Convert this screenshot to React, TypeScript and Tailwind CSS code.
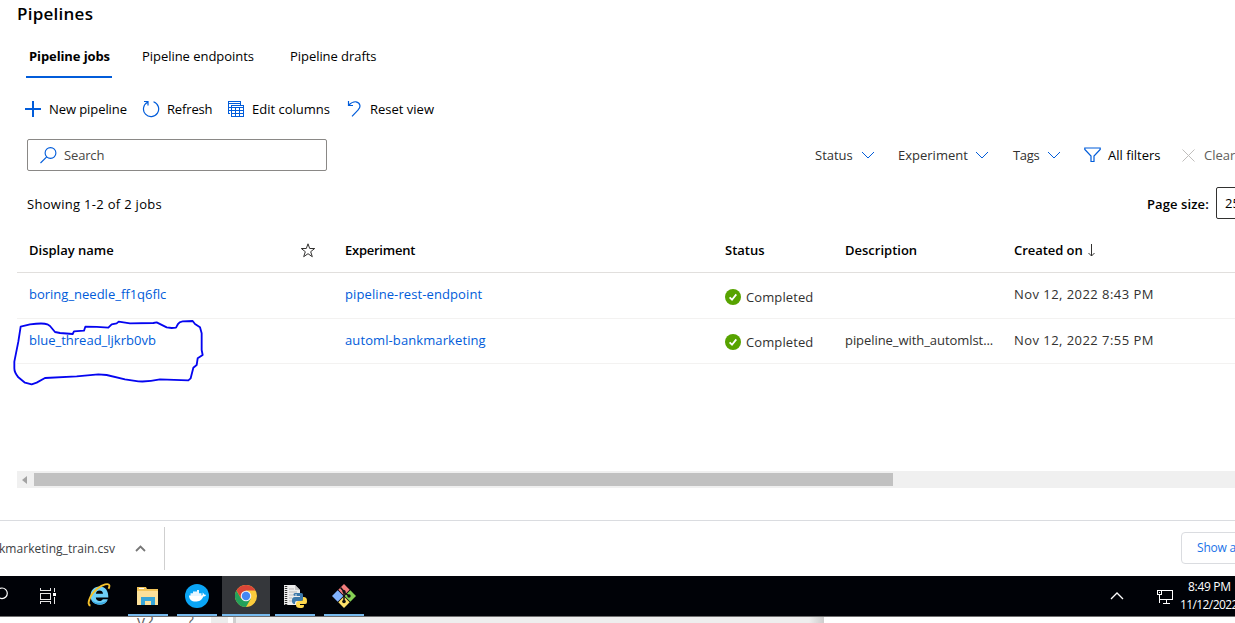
import React from "react";

const BLUE = "#015cda";

function Chevron() {
  return (
    <svg width="14" height="8" viewBox="0 0 14 8" fill="none" stroke={BLUE} strokeWidth="1">
      <path d="M1 1l6 6 6-6" />
    </svg>
  );
}

function Check() {
  return (
    <svg width="16" height="16" viewBox="0 0 16 16" className="shrink-0">
      <circle cx="8" cy="8" r="8" fill="#57a300" />
      <path d="M4.6 8.4l2.4 2.3 4.3-5.3" fill="none" stroke="#fff" strokeWidth="1.8" />
    </svg>
  );
}

function Toolbar() {
  return (
    <div className="flex h-[61px] items-center pl-[25px] text-black">
      <svg width="16" height="16" viewBox="0 0 16 16" stroke={BLUE} strokeWidth="2" shapeRendering="crispEdges">
        <path d="M8 0v16M0 8h16" />
      </svg>
      <span className="ml-2 w-[93px] tracking-[-0.08px]">New pipeline</span>
      <svg width="18" height="18" viewBox="0 0 18 18" fill="none" stroke={BLUE} strokeWidth="1.2">
        <path d="M11.500 1.800A7.600 7.600 0 1 1 5.500 2.300M2 1.500h4v4" />
      </svg>
      <span className="ml-[7px] w-[61px] tracking-[-0.15px]">Refresh</span>
      <svg className="mr-px" width="16" height="16" viewBox="0 0 16 16" fill="none" stroke={BLUE} strokeWidth="1" shapeRendering="crispEdges">
        <path d="M2 12.500H.5V.5h12V4M.5 2.500h12M1 6.500h2M1 9.500h2M3.500 4.500h12v11h-12zM3.500 6.500h12M3.500 9.500h12M3.500 12.500h12M7.500 6v9M11.500 6v9" />
      </svg>
      <span className="ml-[7px] w-[94px]">Edit columns</span>
      <svg width="15" height="17" viewBox="0 0 15 17" fill="none" stroke={BLUE} strokeWidth="1.2">
        <path d="M2.500 1v4.500H7M2.500 5.300C5 2.800 7 1.500 10 1.800c4.500.8 5 5.300 2.200 8L6 16.300" />
      </svg>
      <span className="ml-[9px]">Reset view</span>
    </div>
  );
}

function SearchRow() {
  return (
    <div className="flex h-8 items-center pl-[27px] text-[#323130]">
      <div className="flex h-8 w-[300px] shrink-0 items-center rounded-[2px] border border-[#8a8886] pl-3">
        <svg width="17" height="17" viewBox="0 0 17 17" fill="none" stroke={BLUE} strokeWidth="1.1">
          <circle cx="10.500" cy="6" r="5.400" />
          <path d="M6.700 9.800L.5 16" />
        </svg>
        <span className="ml-[7px] tracking-[-0.15px] text-[#484644]">Search</span>
      </div>
      <div className="ml-[488px] flex shrink-0 items-center whitespace-nowrap">
        <span className="w-[46px]">Status</span>
        <Chevron />
        <span className="ml-[23px] w-[77px]">Experiment</span>
        <Chevron />
        <span className="ml-[24px] w-[34px] tracking-[-0.3px]">Tags</span>
        <Chevron />
        <svg className="ml-[23px]" width="17" height="16" viewBox="0 0 17 16" fill="none" stroke={BLUE} strokeWidth="1.2">
          <path d="M.8 1h15.400v1.500L10 9v5.500H7V9L.8 2.500z" />
        </svg>
        <span className="ml-[7px] w-[74px] text-black">All filters</span>
        <svg width="13" height="13" viewBox="0 0 13 13" stroke="#c0bebc" strokeWidth="1">
          <path d="M.5.5l12 12M12.500.5l-12 12" />
        </svg>
        <span className="ml-[9px] text-[#605e5c]">Clear all</span>
      </div>
    </div>
  );
}

const COLS = "grid grid-cols-[271px_45px_380px_120px_169px_1fr] pl-3 ml-[17px]";

function Row({ name, exp, desc, date, last }: { name: string; exp: string; desc: string; date: string; last?: boolean }) {
  return (
    <div className={`${COLS} border-b border-[#f3f2f1] text-[#323130] ${last ? "h-[45px]" : "h-[46px]"}`}>
      <span className="pt-[11px] text-[#015cda]">{name}</span>
      <span />
      <span className="pt-[11px] tracking-[0.1px] text-[#015cda]">{exp}</span>
      <span className={`flex items-start gap-[5px] ${last ? "pt-[15px]" : "pt-[16px]"}`}>
        <Check />
        <span className="-mt-[2px] tracking-[0.1px]">Completed</span>
      </span>
      <span className="pt-[11px] tracking-[-0.06px]">{desc}</span>
      <span className="pt-[11px] tracking-[0.45px]">{date}</span>
    </div>
  );
}

function Table() {
  return (
    <div>
      <div className={`${COLS} h-[54px] border-b border-[#e1dfdd] pt-[21px] font-semibold text-black`}>
        <span>Display name</span>
        <svg className="mt-[3px]" width="16" height="15" viewBox="0 0 16 15" fill="none" stroke="#323130" strokeWidth="1">
          <path d="M8 .8l1.700 4.700h5l-4 3.200 1.600 5L8 10.700l-4.300 3 1.600-5-4-3.200h5z" />
        </svg>
        <span className="tracking-[-0.25px]">Experiment</span>
        <span>Status</span>
        <span>Description</span>
        <span className="flex">
          <span className="w-[73px] tracking-[-0.05px]">Created on</span>
          <svg className="mt-1" width="9" height="13" viewBox="0 0 9 13" fill="none" stroke="#323130" strokeWidth="1">
            <path d="M4.500 0v12M1.500 9l3 3 3-3" />
          </svg>
        </span>
      </div>
      <Row name="boring_needle_ff1q6flc" exp="pipeline-rest-endpoint" desc="" date="Nov 12, 2022 8:43 PM" />
      <Row name="blue_thread_ljkrb0vb" exp="automl-bankmarketing" desc="pipeline_with_automlst..." date="Nov 12, 2022 7:55 PM" last />
    </div>
  );
}

function Explorer() {
  return (
    <svg className="mt-[2px]" width="22" height="18" viewBox="0 0 22 18">
      <path d="M0 0h9l1 2h11v16H0z" fill="#f2c55a" />
      <path d="M0 4h21v14H0z" fill="#fbe09a" />
      <path d="M4 10h14v8h-4v-4H8v4H4z" fill="#36a5d8" />
      <path d="M2 1h5v1H2z" fill="#fff" />
    </svg>
  );
}

function InternetExplorer() {
  return (
    <svg width="24" height="24" viewBox="0 0 24 24">
      <path
        d="M12.500 3.500C7 3.500 3.500 7.500 3.500 12.800c0 5.500 3.700 9 9 9 4.300 0 7.200-2 8.300-5.600h-5c-.6 1.200-1.700 1.800-3.200 1.800-2.200 0-3.600-1.300-3.800-3.500H21.300C21.600 8 18.500 3.500 12.500 3.500zM8.900 10.800c.3-2 1.700-3.200 3.600-3.200 2 0 3.300 1.200 3.500 3.200z"
        fill="#6fd0f8"
        fillRule="evenodd"
      />
      <path d="M4.500 17c1.500 3 4.500 4.500 8 4.400 3.500 0 6.500-1.600 7.800-4.600-3 3.500-11 4.500-15.800.2z" fill="#36a8e4" />
      <path d="M3.500 22.500C-1 22 3 11.500 10.500 5.500 16 1.200 21.500 0 22.300 2.200c.3 1-.1 2.300-.8 3.500" stroke="#f5c22b" strokeWidth="1.900" fill="none" />
    </svg>
  );
}

function Docker() {
  return (
    <svg className="mt-[2px]" width="24" height="24" viewBox="0 0 24 24">
      <circle cx="12" cy="12" r="12" fill="#0aa5f5" />
      <path d="M4 11.500h12.800c1 0 1-1.500.7-3 1 .5 1.500 1.300 1.600 2 .8-.2 1.500 0 2 .4-.6 1-1.500 1.500-2.800 1.500C17 16 14 17.500 10.500 17.500c-4 0-6.300-2-6.500-6z" fill="#fff" />
      <path d="M5.500 9.200h11v2.800h-11zM8 7.600h6v2H8zM12 6h2v2h-2z" fill="#e8f6ff" />
    </svg>
  );
}

function Chrome() {
  return (
    <svg className="mt-[2px]" width="22" height="22" viewBox="0 0 22 22">
      <circle cx="11" cy="11" r="11" fill="#fbcb3c" />
      <path d="M1.470 5.500A11 11 0 0 0 11 22l4.760-8.250L11 11 6.240 13.750z" fill="#24a05a" />
      <path d="M11 5.500h9.530A11 11 0 0 0 1.470 5.500l4.770 8.250z" fill="#da4537" />
      <circle cx="11" cy="11" r="5.300" fill="#f1f3f5" />
      <circle cx="11" cy="11" r="4.200" fill="#4587f4" />
    </svg>
  );
}

function PythonFile() {
  return (
    <svg className="mt-[2px]" width="23" height="24" viewBox="0 0 23 24">
      <path d="M0 1h11l5 5v15H0z" fill="#eee" />
      <path d="M11 1v5h5z" fill="#c8c8c8" />
      <path d="M2 2v19" stroke="#333" strokeWidth="2.500" strokeDasharray="1 1" />
      <path d="M5 5h5M5 8h8M5 11h5M5 14h3M5 17h4" stroke="#bbb" />
      <path d="M11 9h6c2 0 2 1 2 3v3c0 2-1 2-3 2h-3c-2 0-2 1-2 3-3 0-3-2-3-4s1-3 3-3h5v-1h-5c-2 0-2-3 0-3z" fill="#3c78aa" />
      <path d="M19 13c3 0 4 1 4 4s-1 3-3 3h-4v1h4c0 3-1 3-4 3s-4-1-4-3c0-3 1-4 3-4h2c2 0 2-1 2-4z" fill="#ffd94d" />
      <circle cx="12" cy="11" r=".8" fill="#fff" />
    </svg>
  );
}

function Git() {
  return (
    <svg className="mt-[2px]" width="24" height="24" viewBox="0 0 24 24">
      <path d="M12 0l5.700 5.700L12 11.400 6.300 5.700z" fill="#f17c7c" />
      <path d="M5.700 6.300l5.700 5.700-5.700 5.700L0 12z" fill="#80b3ff" />
      <path d="M18.300 6.300L24 12l-5.700 5.700L12.600 12z" fill="#85d154" />
      <path d="M12 12.600l5.700 5.700L12 24l-5.700-5.700z" fill="#ffe16a" />
      <path d="M8.500 3.500L12 7.500v10M12 8l5 4" stroke="#111" strokeWidth="1.500" fill="none" />
      <circle cx="12" cy="7.500" r="1.600" fill="#111" />
      <circle cx="17" cy="12" r="1.700" fill="#111" />
      <circle cx="12" cy="17.500" r="1.800" fill="#111" />
    </svg>
  );
}

function TaskButton({ children, active, wide }: { children: React.ReactNode; active?: boolean; wide?: boolean }) {
  return (
    <div
      className={`flex h-10 shrink-0 items-center justify-center border-b-2 border-[#76b9ed] ${
        wide ? "w-12" : "w-10"
      } ${active ? "bg-[#35373b]" : ""}`}
    >
      {children}
    </div>
  );
}

function Taskbar() {
  return (
    <div className="flex h-[41px] border-b border-[#6e6e6e] bg-[#000207]">
      <svg className="mt-[11px] shrink-0" width="8" height="13" viewBox="0 0 8 13" fill="none" stroke="#fff" strokeWidth="1.200">
        <circle cx="2" cy="6.300" r="5.300" />
      </svg>
      <svg className="ml-8 mt-3 shrink-0" width="17" height="16" viewBox="0 0 17 16" fill="none" stroke="#e6e6e6" strokeWidth="1" shapeRendering="crispEdges">
        <path d="M.5 0v2.500h10V0M.5 5.500h10v6H.5zM.5 16v-2.500h10V16M14.500 0v4M14.500 9v7" />
        <path d="M13 5h3v3h-3z" fill="#fff" stroke="none" />
      </svg>
      <div className="ml-[30px] w-[41px] pt-[7px]">
        <InternetExplorer />
      </div>
      <div className="flex">
        <TaskButton><Explorer /></TaskButton>
        <div className="w-[9px]" />
        <TaskButton><Docker /></TaskButton>
        <div className="w-[5px]" />
        <TaskButton active wide><Chrome /></TaskButton>
        <div className="w-[5px]" />
        <TaskButton><PythonFile /></TaskButton>
        <div className="w-[9px]" />
        <TaskButton><Git /></TaskButton>
      </div>
      <div className="ml-auto flex w-[125px] shrink-0 items-start text-white">
        <svg className="mt-4 shrink-0" width="14" height="8" viewBox="0 0 14 8" fill="none" stroke="#fff" strokeWidth="1.300">
          <path d="M1 7l6-6 6 6" />
        </svg>
        <svg className="ml-[33px] mt-[14px] shrink-0" width="16" height="14" viewBox="0 0 16 14" fill="none" stroke="#fff" strokeWidth="1" shapeRendering="crispEdges">
          <path d="M4 .5h11.500v9H2.500V5M.5.5h4v4h-4zM2.500 9v4M9.500 9v4M6 13h7M2 2.500h1" />
        </svg>
        <div className="ml-[7px] w-[60px] shrink-0 whitespace-nowrap text-[12px] leading-[18px]">
          <div className="pl-2 pt-[2px] tracking-[-0.3px]">8:49 PM</div>
          <div className="tracking-[-0.6px]">11/12/2022</div>
        </div>
      </div>
    </div>
  );
}

export default function App() {
  return (
    <div className="relative flex h-[623px] w-[1235px] flex-col overflow-hidden bg-white font-['Open_Sans','Noto_Sans',sans-serif] text-[13px] leading-5 whitespace-nowrap">
      <div className="h-7 pl-[17px] pt-[2px] text-[17px] leading-6 font-semibold tracking-[0.25px] text-black">Pipelines</div>
      <div className="flex h-[50px] pl-[26px] text-black">
        <div className="h-[50px] w-[86px] border-b-2 border-[#015cda] pl-[3px] pt-[18px] font-bold tracking-[-0.1px]">Pipeline jobs</div>
        <div className="ml-[30px] w-[148px] pt-[18px] tracking-[-0.04px]">Pipeline endpoints</div>
        <div className="pt-[18px] tracking-[-0.05px]">Pipeline drafts</div>
      </div>
      <Toolbar />
      <SearchRow />
      <div className="mt-4 flex h-8 items-center pl-[27px] text-black">
        <span className="w-[1120px] shrink-0 pt-0.5 tracking-[0.3px]">Showing 1-2 of 2 jobs</span>
        <span className="w-[69px] shrink-0 pt-0.5 font-semibold tracking-[0.1px]">Page size:</span>
        <span className="flex h-8 w-20 shrink-0 items-center rounded-[2px] border border-[#323130] pl-2">25</span>
      </div>
      <Table />
      <div className="mt-[107px] ml-[17px] flex h-[17px] items-center bg-[#f0f0f0]">
        <svg className="ml-[5px] mr-[7px]" width="5" height="8" viewBox="0 0 5 8">
          <path d="M5 0v8L0 4z" fill="#a3a3a3" />
        </svg>
        <div className="h-[13px] w-[859px] bg-[#c1c1c1]" />
      </div>
      <div className="mt-8 flex h-14 border-t border-[#dadce0] text-[12px]">
        <div className="mt-[6px] flex h-[43px] w-[165px] shrink-0 items-center border-r border-[#cfcfcf] text-[#3c4043]">
          <span className="-ml-px w-[136px] tracking-[0.04px]">kmarketing_train.csv</span>
          <svg width="11" height="7" viewBox="0 0 11 7" fill="none" stroke="#777" strokeWidth="1.800">
            <path d="M1 6l4.500-4.500L10 6" />
          </svg>
        </div>
        <div className="mt-[11px] ml-[1016px] h-8 w-20 shrink-0 rounded-[4px] border border-[#dadce0] pl-[15px] leading-[30px] font-medium tracking-[-0.2px] text-[#1a73e8]">Show all</div>
      </div>
      <Taskbar />
      <div className="flex h-[6px] overflow-hidden text-[16px] leading-[14px] text-[#666]">
        <div className="w-[187px] pl-[137px] -mt-[3px]">v2</div>
        <div className="w-6 -mt-[3px]">?</div>
        <div className="w-[17px] bg-[#ececec]" />
        <div className="w-[5px]" />
        <div className="w-[3px] bg-[#cfcfcf]" />
        <div className="w-[573px] bg-[#eeeeee]" />
        <div className="w-[15px] bg-linear-to-r from-[#eeeeee] to-[#cccccc]" />
      </div>
      <svg className="absolute left-0 top-[270px]" width="210" height="125" viewBox="0 0 630 375" fill="none" stroke="#0505f0" strokeWidth="5.500" strokeLinejoin="round">
        <path d="M62 170L90 163Q130 158 142 163L150 168 165 186 180 189 218 192 222 184 252 182 256 170Q290 170 325 173L335 163 350 160 356 155 390 160 460 159 470 157 500 172 515 174 528 173 534 162Q538 155 548 154L578 153 585 162 600 172 605 190 605 240 608 255 593 265 590 285 580 293 572 325 565 331 480 328Q445 336 415 334L375 328 320 315 295 313 230 319 135 324 110 338 95 343 75 338 55 322Q43 308 43 295L43 275 55 215Z" />
      </svg>
    </div>
  );
}
